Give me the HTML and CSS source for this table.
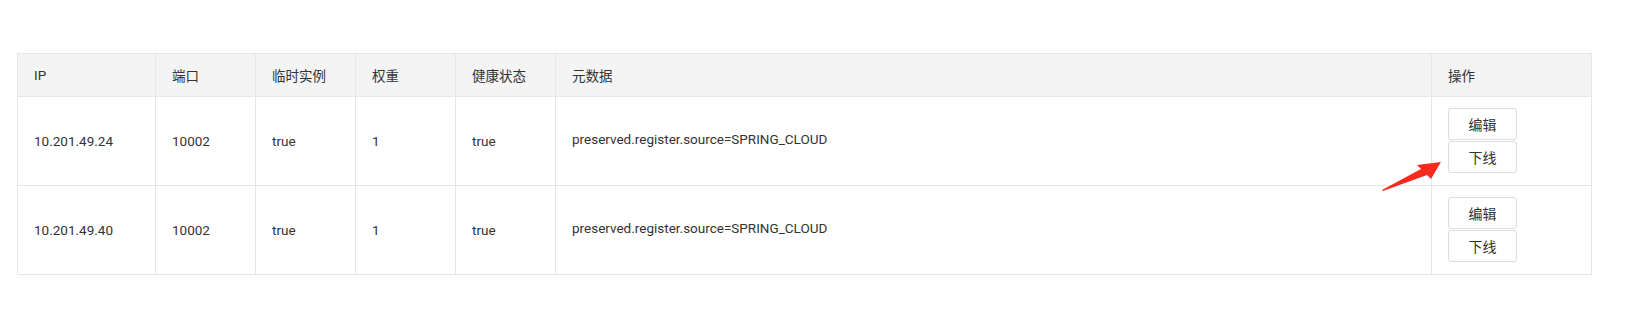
FILE: index.html
```html
<!DOCTYPE html>
<html lang="zh-CN">
<head>
<meta charset="utf-8">
<title>实例列表</title>
<link rel="stylesheet" href="styles.css">
</head>
<body>
<div class="page">
  <table class="grid">
    <colgroup>
      <col class="c-ip"><col class="c-port"><col class="c-eph"><col class="c-weight"><col class="c-health"><col class="c-meta"><col class="c-ops">
    </colgroup>
    <thead>
      <tr>
        <th>IP</th><th>端口</th><th>临时实例</th><th>权重</th><th>健康状态</th><th>元数据</th><th>操作</th>
      </tr>
    </thead>
    <tbody>
      <tr>
        <td>10.201.49.24</td><td>10002</td><td>true</td><td>1</td><td>true</td>
        <td><div class="meta">preserved.register.source=SPRING_CLOUD</div></td>
        <td class="ops"><button class="btn">编辑</button><button class="btn">下线</button></td>
      </tr>
      <tr>
        <td>10.201.49.40</td><td>10002</td><td>true</td><td>1</td><td>true</td>
        <td><div class="meta">preserved.register.source=SPRING_CLOUD</div></td>
        <td class="ops"><button class="btn">编辑</button><button class="btn">下线</button></td>
      </tr>
    </tbody>
  </table>
  <svg class="arrow" width="70" height="40" viewBox="0 0 70 40" xmlns="http://www.w3.org/2000/svg">
    <polygon points="2,30 41,9 37,5 61,2 51,19 47,15 3,31" fill="#f72b1c"/>
  </svg>
</div>
</body>
</html>
```
FILE: styles.css
```css
html, body {
  margin: 0;
  padding: 0;
  background: #fff;
}
.page {
  position: relative;
  padding: 53px 0 0 17px;
  font-family: Roboto, "Noto Sans CJK SC", sans-serif;
  font-size: 13.5px;
  color: #333;
}
.grid {
  border-collapse: collapse;
  table-layout: fixed;
  width: 1574px;
}
.c-ip { width: 138px; }
.c-port { width: 100px; }
.c-eph { width: 100px; }
.c-weight { width: 100px; }
.c-health { width: 100px; }
.c-meta { width: 876px; }
.c-ops { width: 160px; }
.grid th, .grid td {
  border: 1px solid #e6e6e6;
  padding: 0 16px;
  text-align: left;
  vertical-align: middle;
  font-weight: normal;
}
.grid th {
  background: #f4f4f4;
  height: 42px;
}
.meta {
  margin-bottom: 5px;
}
.grid td.ops {
  padding: 11px 16px 12px;
}
.btn {
  display: block;
  width: 69px;
  height: 32px;
  padding: 0;
  margin: 0;
  background: #fff;
  border: 1px solid #dcdcdc;
  border-radius: 3px;
  font-family: "Noto Sans CJK SC", sans-serif;
  font-size: 14px;
  color: #333;
}
.btn + .btn {
  margin-top: 1px;
}
.arrow {
  position: absolute;
  left: 1380px;
  top: 160px;
}
```
